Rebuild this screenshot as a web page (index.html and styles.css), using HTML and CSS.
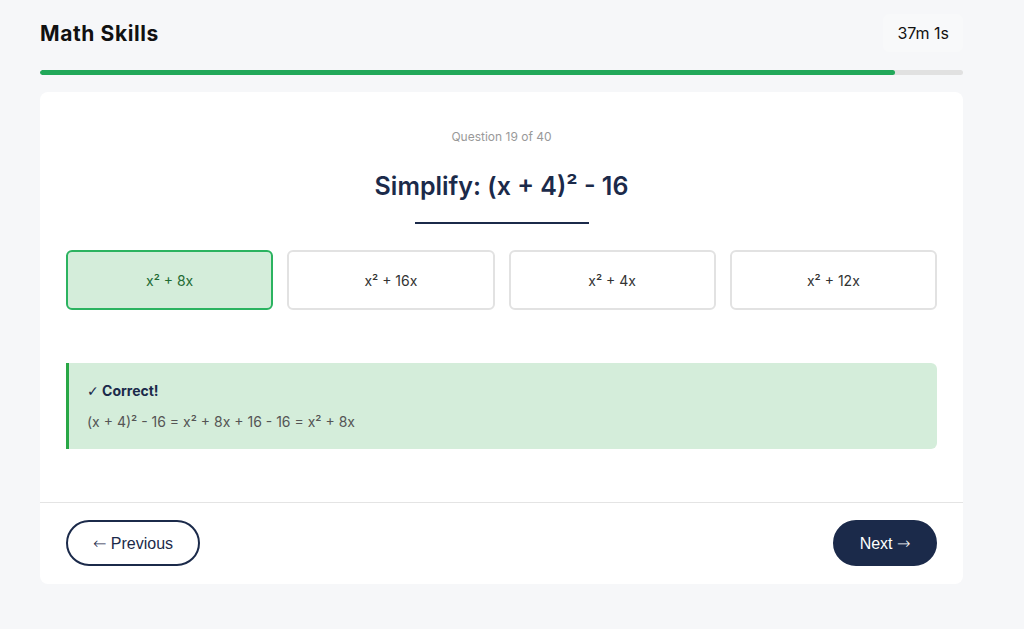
FILE: index.html
```html
<!DOCTYPE html>
<html lang="en">
<head>
<meta charset="utf-8">
<title>Math Skills</title>
<link rel="stylesheet" href="styles.css">
</head>
<body>
<div class="page">
  <header class="top">
    <h1 class="title">Math Skills</h1>
    <div class="timer">37m 1s</div>
  </header>
  <div class="progress"><div class="progress-fill" style="width:92.6%"></div></div>
  <main class="card">
    <section class="card-body">
      <div class="qnum">Question 19 of 40</div>
      <h2 class="question">Simplify: (x + 4)² - 16</h2>
      <div class="rule"></div>
      <div class="options">
        <button class="option selected">x² + 8x</button>
        <button class="option">x² + 16x</button>
        <button class="option">x² + 4x</button>
        <button class="option">x² + 12x</button>
      </div>
      <div class="feedback">
        <div class="fb-title"><span class="check">✓</span> Correct!</div>
        <div class="fb-text">(x + 4)² - 16 = x² + 8x + 16 - 16 = x² + 8x</div>
      </div>
    </section>
    <footer class="card-foot">
      <button class="btn btn-outline"><span class="arrow">←</span> Previous</button>
      <button class="btn btn-solid">Next <span class="arrow">→</span></button>
    </footer>
  </main>
</div>
</body>
</html>
```
FILE: styles.css
```css
* { box-sizing: border-box; }
html, body { margin: 0; padding: 0; }
body {
  background: #f6f7f9;
  font-family: Inter, "Liberation Sans", sans-serif;
  color: #1b2a4a;
}
.page {
  width: 923px;
  margin-left: 40px;
}
.top {
  display: flex;
  justify-content: space-between;
  align-items: center;
  height: 66px;
}
.title {
  margin: 0;
  font-family: Inter, sans-serif;
  font-weight: 700;
  font-size: 21px;
  color: #111;
  letter-spacing: 0.6px;
}
.timer {
  background: #f8f9fa;
  border-radius: 6px;
  padding: 9px 14px;
  font-size: 16px;
  color: #111;
}
.progress {
  margin-top: 4px;
  height: 5px;
  background: #e1e1e1;
  border-radius: 3px;
  overflow: hidden;
}
.progress-fill {
  height: 100%;
  background: #22a85a;
  border-radius: 3px;
}
.card {
  margin-top: 17px;
  background: #fff;
  border-radius: 8px;
}
.card-body {
  padding: 37px 26px 53px;
  display: flex;
  flex-direction: column;
  align-items: center;
}
.qnum {
  font-size: 12px;
  color: #999;
  line-height: 16px;
}
.question {
  margin: 26px 0 0;
  font-size: 25px;
  font-weight: 600;
  color: #1b2a4a;
  line-height: 30px;
}
.rule {
  width: 174px;
  height: 2px;
  background: #1b2a4a;
  margin-top: 21px;
}
.options {
  margin-top: 26px;
  width: 100%;
  display: grid;
  grid-template-columns: repeat(4, 1fr);
  gap: 14px;
}
.option {
  height: 60px;
  background: #fff;
  border: 2px solid #e2e2e2;
  border-radius: 6px;
  font-family: Inter, sans-serif;
  font-size: 14px;
  color: #333;
}
.option.selected {
  background: #d4edda;
  border-color: #2bb360;
  color: #1f6b34;
}
.feedback {
  margin-top: 53px;
  width: 100%;
  background: #d4edda;
  border-left: 3px solid #28a745;
  border-radius: 0 6px 6px 0;
  padding: 19px 18px 18px;
}
.fb-title {
  font-size: 14px;
  font-weight: 700;
  color: #1b2a4a;
  line-height: 18px;
}
.check {
  font-family: "DejaVu Sans", sans-serif;
  font-weight: 400;
}
.fb-text {
  margin-top: 13px;
  font-size: 14px;
  color: #555;
  line-height: 18px;
}
.card-foot {
  border-top: 1px solid #e4e4e4;
  padding: 17px 26px 18px;
  display: flex;
  justify-content: space-between;
  align-items: center;
}
.btn {
  height: 46px;
  border-radius: 23px;
  font-family: "Liberation Sans", Arial, sans-serif;
  font-size: 16px;
  padding: 0;
  white-space: nowrap;
}
.arrow {
  font-family: "DejaVu Sans", sans-serif;
  font-weight: 300;
}
.btn-outline {
  background: #fff;
  border: 2px solid #1b2a4a;
  color: #1b2a4a;
  width: 134px;
}
.btn-solid {
  background: #1b2a4a;
  border: 2px solid #1b2a4a;
  color: #fff;
  width: 104px;
}
```
